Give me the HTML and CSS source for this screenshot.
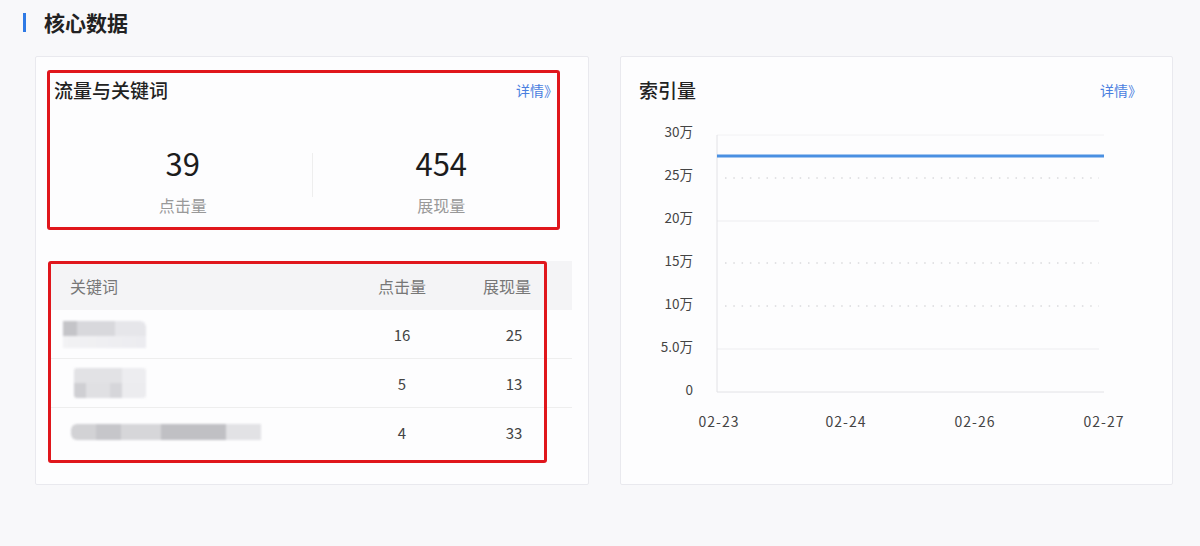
FILE: index.html
```html
<!DOCTYPE html>
<html lang="zh-CN">

<head>
  <meta charset="UTF-8">
  <meta name="viewport" content="width=device-width, initial-scale=1.0">
  <title>核心数据</title>
  <link rel="stylesheet" href="styles.css">
</head>

<body>
  <header class="page-head">
    <span class="page-bar"></span>
    <h1>核心数据</h1>
  </header>

  <section class="cards">

    <!-- 流量与关键词 -->
    <div class="card">
      <div class="card-head">
        <h2>流量与关键词</h2>
        <a href="#" class="more">详情》</a>
      </div>
      <div class="stats">
        <div class="stat">
          <strong>39</strong>
          <span>点击量</span>
        </div>
        <div class="stat-sep"></div>
        <div class="stat">
          <strong>454</strong>
          <span>展现量</span>
        </div>
      </div>
      <table class="words">
        <thead>
          <tr>
            <th class="col-word">关键词</th>
            <th class="col-click">点击量</th>
            <th class="col-show">展现量</th>
          </tr>
        </thead>
        <tbody>
          <tr>
            <td class="col-word"><span class="blur blur-a"></span></td>
            <td class="col-click">16</td>
            <td class="col-show">25</td>
          </tr>
          <tr>
            <td class="col-word"><span class="blur blur-b"></span></td>
            <td class="col-click">5</td>
            <td class="col-show">13</td>
          </tr>
          <tr>
            <td class="col-word"><span class="blur blur-c"></span></td>
            <td class="col-click">4</td>
            <td class="col-show">33</td>
          </tr>
        </tbody>
      </table>

      <!-- 截图上的红色标注框 -->
      <div class="mark mark-stats"></div>
      <div class="mark mark-table"></div>
    </div>

    <!-- 索引量 -->
    <div class="card">
      <div class="card-head">
        <h2>索引量</h2>
        <a href="#" class="more">详情》</a>
      </div>
      <svg class="chart" width="517" height="330" viewBox="0 0 517 330">
        <g class="y-labels">
          <text x="54" y="24">30万</text>
          <text x="54" y="67">25万</text>
          <text x="54" y="110">20万</text>
          <text x="54" y="153">15万</text>
          <text x="54" y="196">10万</text>
          <text x="54" y="239">5.0万</text>
          <text x="54" y="282">0</text>
        </g>
        <line class="grid-top" x1="78" y1="22" x2="465" y2="22" />
        <line class="grid-dot" x1="86" y1="65" x2="460" y2="65" />
        <line class="grid-line" x1="78" y1="108" x2="460" y2="108" />
        <line class="grid-dot" x1="86" y1="150" x2="460" y2="150" />
        <line class="grid-dot" x1="86" y1="193" x2="460" y2="193" />
        <line class="grid-line" x1="78" y1="236" x2="460" y2="236" />
        <line class="axis" x1="78" y1="22" x2="78" y2="279" />
        <line class="axis" x1="78" y1="279" x2="465" y2="279" />
        <line class="series" x1="78" y1="43" x2="465" y2="43" />
        <g class="x-labels">
          <text x="80" y="314">02-23</text>
          <text x="207" y="314">02-24</text>
          <text x="336" y="314">02-26</text>
          <text x="465" y="314">02-27</text>
        </g>
      </svg>
    </div>

  </section>
</body>

</html>
```

FILE: styles.css
```css
body {
  margin: 0;
  background: #f8f8fa;
  font-family: "Noto Sans CJK SC", "Noto Sans", sans-serif;
  color: #222;
}

.page-head {
  display: flex;
  align-items: center;
  gap: 18px;
  padding: 12px 0 0 23px;
  height: 20px;
}

.page-bar {
  width: 3px;
  height: 19px;
  background: #2f7ae5;
}

.page-head h1 {
  margin: 0;
  font-size: 21px;
  line-height: 20px;
  font-weight: 700;
  color: #222;
}

.cards {
  display: flex;
  gap: 31px;
  padding: 24px 0 0 35px;
}

.card {
  position: relative;
  box-sizing: border-box;
  width: 554px;
  height: 429px;
  padding: 19px 18px 0;
  background: #fdfdfe;
  border: 1px solid #e9e9ee;
  border-radius: 2px;
}

.card + .card {
  width: 553px;
}

.card-head {
  display: flex;
  justify-content: space-between;
  align-items: center;
  height: 27px;
}

.card-head h2 {
  margin: 0;
  font-size: 19px;
  font-weight: 500;
  color: #222;
}

.more {
  margin-right: 12px;
  font-size: 14px;
  color: #4a7fe0;
  text-decoration: none;
}

/* 点击 / 展现 */
.stats {
  display: flex;
  align-items: center;
  margin-top: 40px;
}

.stat {
  flex: 1;
  display: flex;
  flex-direction: column;
  align-items: center;
  gap: 12px;
}

.stat strong {
  font-size: 31px;
  line-height: 40px;
  font-weight: 400;
  color: #1c1c1c;
}

.stat span {
  font-size: 16px;
  line-height: 20px;
  color: #999;
}

.stat-sep {
  width: 1px;
  height: 44px;
  margin-top: -8px;
  background: #eee;
}

/* 关键词表格 */
.words {
  width: 523px;
  margin: 46px 0 0 -5px;
  border-collapse: collapse;
  table-layout: fixed;
  font-size: 15px;
}

.words th,
.words td {
  padding: 0;
}

.words th {
  height: 49px;
  background: #f4f4f6;
  font-size: 16px;
  font-weight: 400;
  color: #777;
}

.words td {
  height: 48px;
  border-bottom: 1px solid #eee;
  color: #444;
}

.words tr:last-child td {
  border-bottom: none;
}

.words .col-word {
  padding-left: 21px;
  text-align: left;
}

.col-click {
  width: 80px;
  text-align: center;
}

.col-show {
  width: 130px;
  text-align: center;
}

.words td.col-show {
  padding-left: 14px;
}

.blur {
  display: block;
  filter: blur(1px);
}

.blur-a {
  width: 83px;
  height: 27px;
  margin-left: -7px;
  background:
    linear-gradient(90deg, #c4c4c8 0 14px, #d8d8dc 14px 52px, #e6e6ea 52px) top / 100% 15px no-repeat,
    linear-gradient(90deg, #f2f2f4, #ececf0) bottom / 100% 12px no-repeat;
  border-radius: 0 6px 0 0;
}

.blur-b {
  width: 72px;
  height: 30px;
  margin-left: 4px;
  background:
    linear-gradient(90deg, #e2e2e5 0 48px, #ededf0 48px) top / 100% 15px no-repeat,
    linear-gradient(90deg, #cfcfd3 0 12px, #e0e0e3 12px 36px, #d6d6da 36px 48px, #ececef 48px) bottom / 100% 15px no-repeat;
  border-radius: 3px;
}

.blur-c {
  width: 190px;
  height: 16px;
  margin-left: 1px;
  background: linear-gradient(90deg, #d2d2d5 0 25px, #c6c6ca 25px 50px, #d6d6d9 50px 90px, #c0c0c4 90px 155px, #e2e2e5 155px);
  border-radius: 6px 0 0 6px;
}

/* 红色标注框 */
.mark {
  position: absolute;
  border: 3px solid #e0161c;
  border-radius: 3px;
  box-sizing: border-box;
}

.mark-stats {
  left: 11px;
  top: 13px;
  width: 513px;
  height: 160px;
}

.mark-table {
  left: 12px;
  top: 204px;
  width: 499px;
  height: 202px;
}

/* 图表 */
.chart {
  display: block;
  margin-top: 10px;
  font-family: "Noto Sans CJK SC", "Noto Sans", sans-serif;
}

.y-labels text {
  font-size: 13.5px;
  fill: #444;
  text-anchor: end;
}

.x-labels text {
  font-size: 14px;
  fill: #444;
  text-anchor: middle;
  letter-spacing: 1px;
}

.grid-top {
  stroke: #f2f2f4;
  stroke-width: 1;
}

.grid-line {
  stroke: #ededf0;
  stroke-width: 1;
}

.grid-dot {
  stroke: #c8c8cc;
  stroke-width: 1;
  stroke-dasharray: 1.5 6.8;
}

.axis {
  stroke: #e2e2e6;
  stroke-width: 1;
}

.series {
  stroke: #4a90e2;
  stroke-width: 3;
}
```
